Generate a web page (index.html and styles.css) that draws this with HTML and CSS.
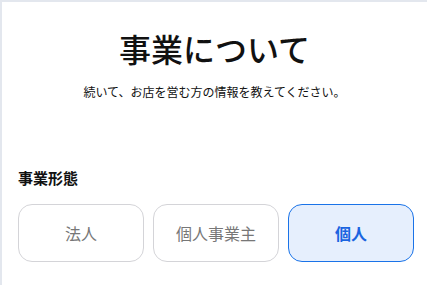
FILE: index.html
```html
<!DOCTYPE html>
<html lang="ja">
<head>
<meta charset="utf-8">
<link rel="stylesheet" href="styles.css">
</head>
<body>
<main class="card">
  <header class="head">
    <h1 class="title">事業について</h1>
    <p class="subtitle">続いて、お店を営む方の情報を教えてください。</p>
  </header>
  <section class="field">
    <h2 class="label">事業形態</h2>
    <div class="options">
      <button class="option">法人</button>
      <button class="option">個人事業主</button>
      <button class="option selected">個人</button>
    </div>
  </section>
</main>
</body>
</html>
```
FILE: styles.css
```css
html, body {
  margin: 0;
  padding: 0;
  background: #e3e7ee;
  height: 100%;
  overflow: hidden;
}
body {
  font-family: "Noto Sans CJK JP", "Noto Sans", sans-serif;
  color: #111;
}
.card {
  margin: 2px 0 0 2px;
  background: #fff;
  height: calc(100% - 2px);
  box-sizing: border-box;
  padding: 0 16px;
}
.head {
  text-align: center;
  padding-top: 24px;
}
.title {
  margin: 0;
  font-size: 32px;
  line-height: 44px;
  font-weight: 500;
}
.subtitle {
  margin: 14px 0 0;
  font-size: 12px;
  line-height: 16px;
}
.field {
  margin-top: 68px;
}
.label {
  margin: 0;
  font-size: 15px;
  line-height: 20px;
  font-weight: 700;
}
.options {
  margin-top: 16px;
  display: grid;
  grid-template-columns: repeat(3, 126px);
  gap: 9px;
}
.option {
  height: 58px;
  border: 1px solid #d4d4d8;
  border-radius: 14px;
  background: #fff;
  font-family: inherit;
  font-size: 16px;
  color: #777;
  padding: 0;
}
.option.selected {
  border-color: #1a73e8;
  background: #e6effd;
  color: #1a64e0;
  font-weight: 700;
}
```
